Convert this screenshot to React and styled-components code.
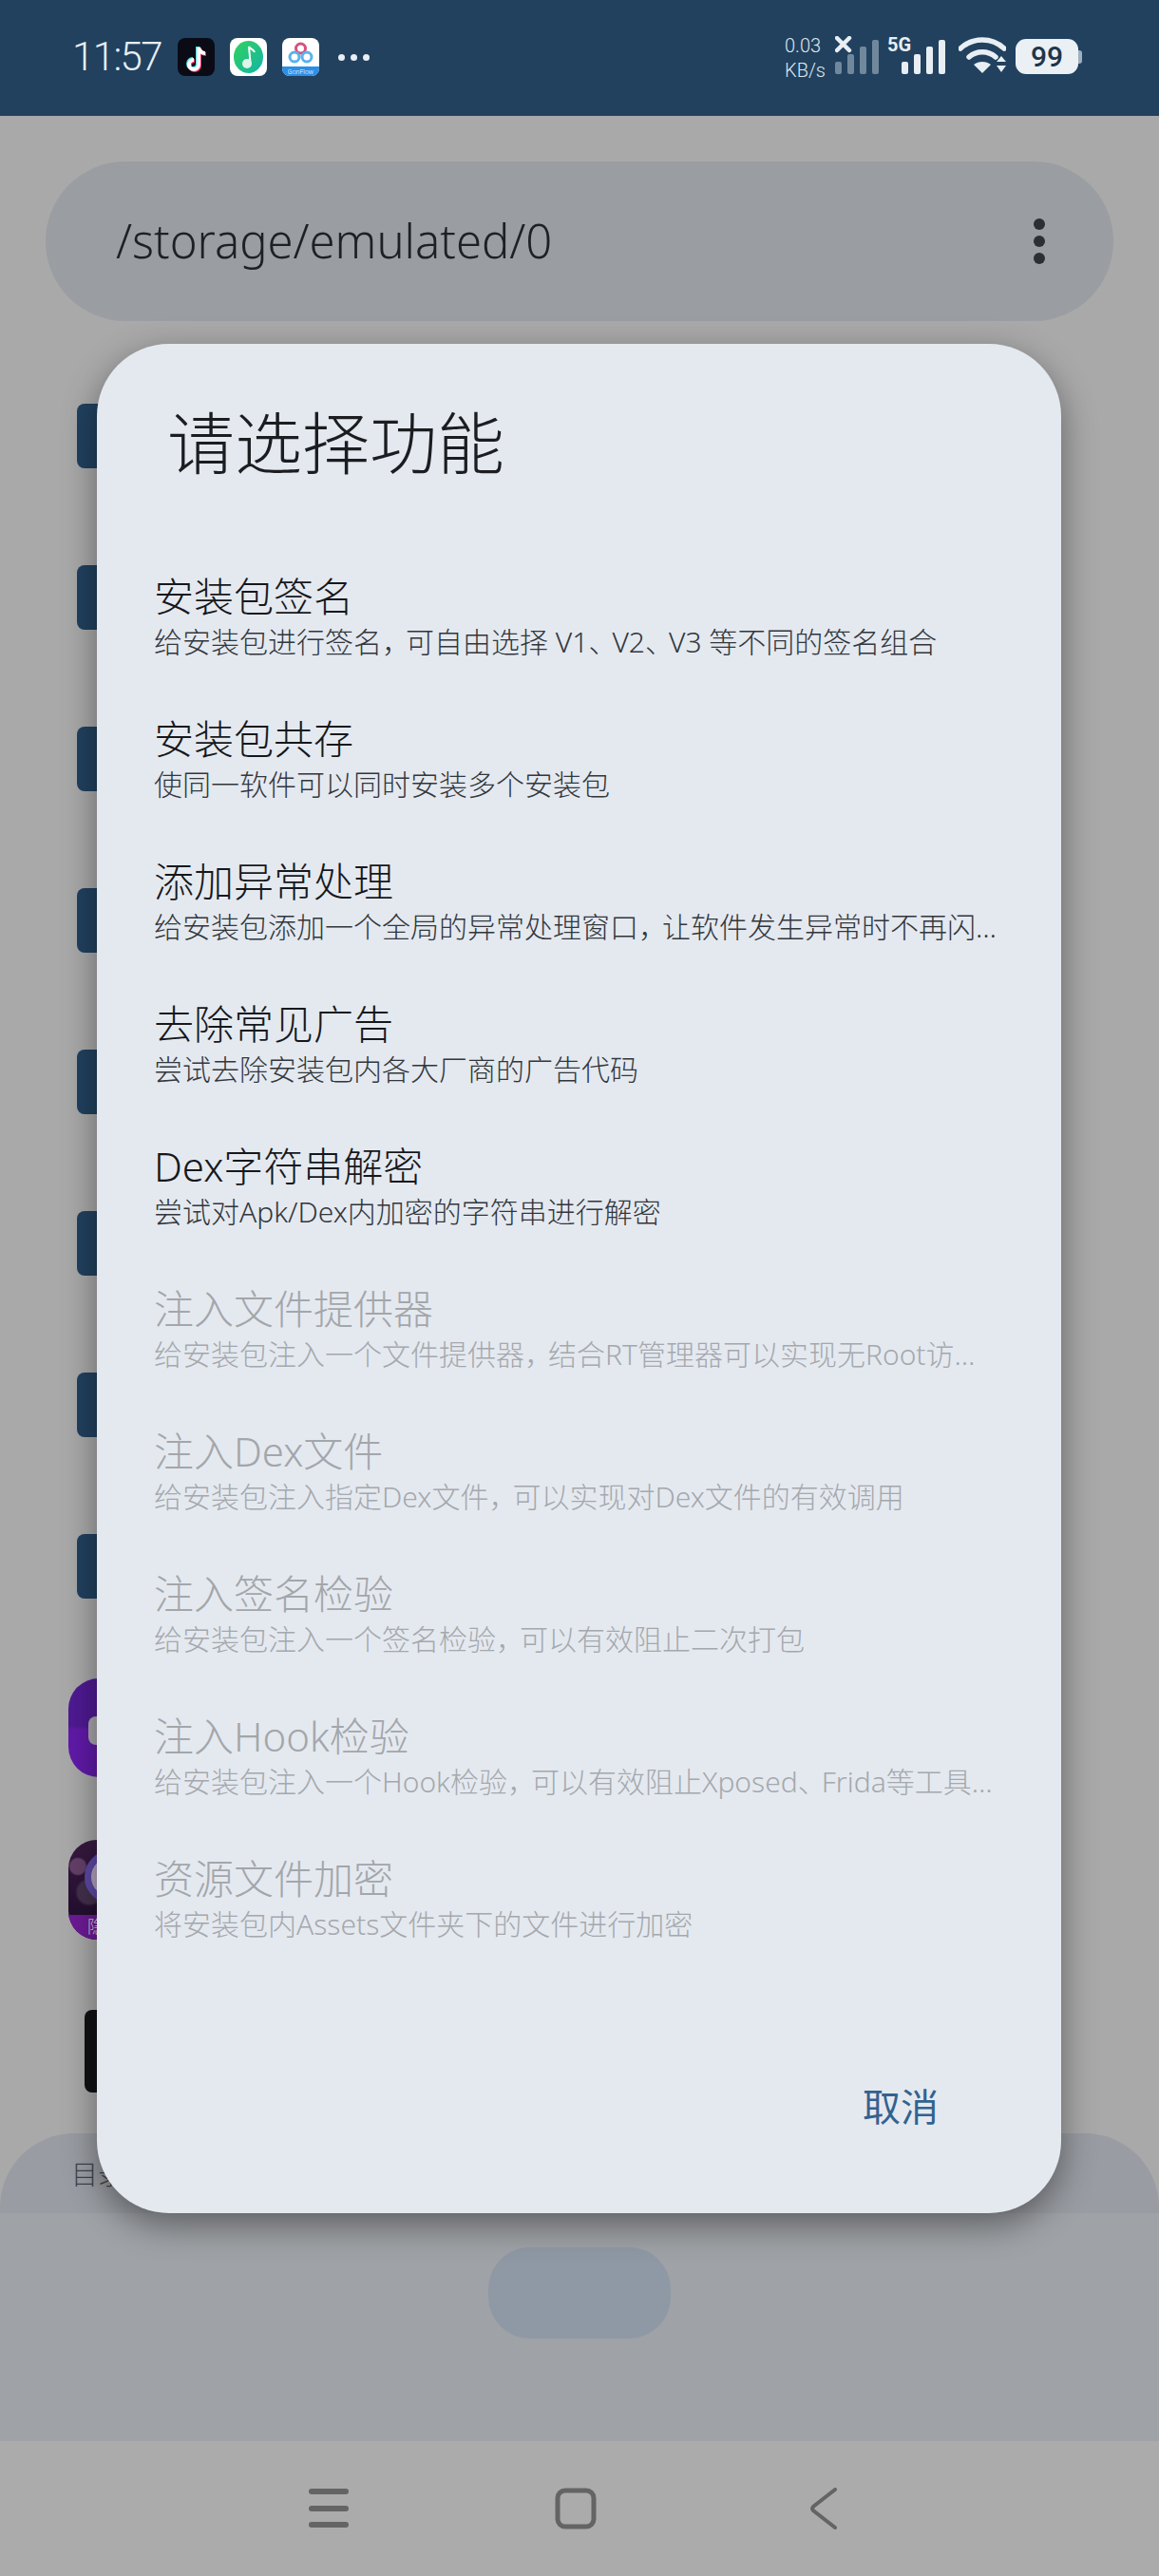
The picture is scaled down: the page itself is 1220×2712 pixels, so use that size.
import styled, { createGlobalStyle } from 'styled-components';

const Global = createGlobalStyle`
  html, body { margin: 0; padding: 0; }
  body { font-family: Roboto, "Noto Sans CJK SC", sans-serif; font-weight: 300; }
`;

const Screen = styled.div`
  position: relative;
  width: 1220px;
  height: 2712px;
  overflow: hidden;
  display: flex;
  flex-direction: column;
  background: #a9a9aa;
`;

const StatusBar = styled.header`
  height: 122px;
  flex: none;
  background: #21415f;
  color: #e8eef3;
  display: flex;
  align-items: flex-start;
  justify-content: space-between;
  padding: 38px 85px 0 76px;
  box-sizing: border-box;
`;

const StatusLeft = styled.div`
  display: flex;
  align-items: center;
  height: 44px;
`;

const Clock = styled.span`
  font-size: 42px;
  line-height: 44px;
  width: 111px;
  letter-spacing: -1.6px;
`;

const AppIcon = styled.svg`
  width: 39px;
  height: 40px;
  margin-right: 16px;
  display: block;
`;

const MoreDots = styled.div`
  display: flex;
  gap: 6px;
  margin-left: 4px;
  span {
    width: 7px;
    height: 7px;
    border-radius: 50%;
    background: #e8eef3;
  }
`;

const StatusRight = styled.div`
  display: flex;
  align-items: flex-start;
`;

const Speed = styled.div`
  width: 53px;
  font-size: 20px;
  line-height: 26px;
  color: #dfe7ee;
  margin-top: -3px;
`;

const Signal = styled.svg`
  display: block;
  height: 40px;
  margin-right: ${(p) => p.$gap}px;
`;

const Battery = styled.div`
  position: relative;
  width: 66px;
  height: 37px;
  margin-top: 3px;
  border-radius: 11px;
  background: #eaf0f4;
  color: #21354b;
  font-size: 30px;
  font-weight: 500;
  line-height: 37px;
  text-align: center;
  &::after {
    content: '';
    position: absolute;
    right: -4px;
    top: 12px;
    width: 4px;
    height: 14px;
    border-radius: 0 3px 3px 0;
    background: #9fb0bf;
  }
`;

const Main = styled.main`
  flex: 1;
  display: flex;
  flex-direction: column;
`;

const PathBar = styled.div`
  height: 168px;
  margin: 48px 48px 0;
  padding: 0 72px 0 74px;
  border-radius: 84px;
  background: #9a9da1;
  color: #1d2024;
  display: flex;
  align-items: center;
  justify-content: space-between;
`;

const PathText = styled.span`
  margin-bottom: 3px;
  font-family: "Noto Sans", sans-serif;
  font-size: 49px;
`;

const MenuDots = styled.div`
  display: flex;
  flex-direction: column;
  gap: 6px;
  span {
    width: 12px;
    height: 12px;
    border-radius: 50%;
    background: #2c2f35;
  }
`;

const FileList = styled.div`
  margin: 36px 0 2px;
`;

const FileRow = styled.div`
  height: 170px;
  display: flex;
  align-items: center;
`;

const Folder = styled.div`
  width: 100px;
  height: 68px;
  margin-left: 81px;
  border-radius: 8px;
  background: #21415f;
`;

const PurpleApp = styled.div`
  position: relative;
  width: 104px;
  height: 104px;
  margin-left: 72px;
  border-radius: 32px;
  background: linear-gradient(#4f1a93 0 48%, #601aa8 52%);
  &::after {
    content: '';
    position: absolute;
    left: 21px;
    top: 40px;
    width: 40px;
    height: 30px;
    border-radius: 8px;
    background: #a9a7ad;
  }
`;

const PhotoApp = styled.div`
  position: relative;
  width: 104px;
  height: 105px;
  margin-left: 72px;
  border-radius: 30px;
  overflow: hidden;
  background:
    radial-gradient(circle at 10px 28px, #64406a 0 8px, transparent 10px),
    radial-gradient(circle at 22px 55px, #43304c 0 12px, transparent 15px),
    linear-gradient(#3a1a42, #1c0b2a);
  &::before {
    content: '';
    position: absolute;
    left: 17px;
    top: 11px;
    width: 56px;
    height: 56px;
    box-sizing: border-box;
    border: 7px solid #5d4aa5;
    border-radius: 50%;
    background: #b3a3bf;
  }
`;

const PhotoLabel = styled.div`
  position: absolute;
  left: 0;
  right: 0;
  bottom: 0;
  height: 26px;
  padding-left: 20px;
  background: #6d1a95;
  color: #d8cfe0;
  font-size: 18px;
  line-height: 26px;
`;

const BlackApp = styled.div`
  width: 90px;
  height: 87px;
  margin-left: 89px;
  border-radius: 8px;
  background: #0f1214;
`;

const Sheet = styled.section`
  height: 84px;
  flex: none;
  padding: 33px 0 0 75px;
  box-sizing: border-box;
  border-radius: 78px 78px 0 0;
  background: #999ca2;
  color: #3f4348;
  font-size: 28px;
  line-height: 24px;
`;

const FabArea = styled.div`
  height: 240px;
  flex: none;
  padding-top: 36px;
  box-sizing: border-box;
  background: #9fa2a6;
  display: flex;
  justify-content: center;
`;

const Fab = styled.div`
  width: 192px;
  height: 96px;
  border-radius: 44px;
  background: #8f99a5;
`;

const NavBar = styled.nav`
  height: 142px;
  flex: none;
  background: #ababab;
  display: grid;
  grid-template-columns: repeat(3, 260px);
  justify-content: center;
  justify-items: center;
  align-items: center;
  padding: 0 8px 0 0;
  box-sizing: border-box;
`;

const NavIcon = styled.svg`
  display: block;
  width: 44px;
  height: 44px;
`;

const Dialog = styled.div`
  position: absolute;
  left: 102px;
  top: 362px;
  width: 1015px;
  height: 1968px;
  box-sizing: border-box;
  padding: 59px 60px 88px 60px;
  border-radius: 76px;
  background: #e4e9f0;
  box-shadow: 0 12px 36px rgba(0, 0, 0, 0.42);
  display: flex;
  flex-direction: column;
  font-family: "Noto Sans", "Noto Sans CJK SC", sans-serif;
`;

const DialogTitle = styled.h2`
  margin: 0 0 89px 14px;
  font-size: 71px;
  font-weight: 300;
  line-height: 90px;
  color: #1b1d20;
`;

const Option = styled.div`
  height: 150px;
  flex: none;
`;

const OptionTitle = styled.div`
  font-size: 42px;
  line-height: 55px;
  white-space: nowrap;
  color: ${(p) => (p.$disabled ? '#a3a6aa' : '#16181b')};
`;

const OptionDesc = styled.div`
  margin-right: 5px;
  font-size: 30px;
  line-height: 41px;
  white-space: nowrap;
  overflow: hidden;
  text-overflow: ellipsis;
  color: ${(p) => (p.$disabled ? '#a5a8ac' : '#33373c')};
`;

const Mark = styled.span`
  letter-spacing: -5px;
`;

const Actions = styled.div`
  margin-top: auto;
  padding-right: 69px;
  display: flex;
  justify-content: flex-end;
`;

const CancelButton = styled.button`
  padding: 0;
  border: 0;
  background: none;
  font-family: inherit;
  font-weight: 400;
  font-size: 40px;
  line-height: 48px;
  color: #33628f;
`;

const options = [
  { title: '安装包签名', desc: '给安装包进行签名，可自由选择 V1、V2、V3 等不同的签名组合' },
  { title: '安装包共存', desc: '使同一软件可以同时安装多个安装包' },
  { title: '添加异常处理', desc: '给安装包添加一个全局的异常处理窗口，让软件发生异常时不再闪退并显示详细信息' },
  { title: '去除常见广告', desc: '尝试去除安装包内各大厂商的广告代码' },
  { title: 'Dex字符串解密', desc: '尝试对Apk/Dex内加密的字符串进行解密' },
  { title: '注入文件提供器', desc: '给安装包注入一个文件提供器，结合RT管理器可以实现无Root访问软件私有目录', disabled: true },
  { title: '注入Dex文件', desc: '给安装包注入指定Dex文件，可以实现对Dex文件的有效调用', disabled: true },
  { title: '注入签名检验', desc: '给安装包注入一个签名检验，可以有效阻止二次打包', disabled: true },
  { title: '注入Hook检验', desc: '给安装包注入一个Hook检验，可以有效阻止Xposed、Frida等工具进行注入', disabled: true },
  { title: '资源文件加密', desc: '将安装包内Assets文件夹下的文件进行加密', disabled: true },
];

const folders = [0, 1, 2, 3, 4, 5, 6, 7];

// the font in the reference sets ， and 、 narrower than a full em
const withMarks = (text) =>
  text.split(/([，、])/).map((part, i) => (i % 2 ? <Mark key={i}>{part}</Mark> : part));

const TikTokIcon = () => (
  <AppIcon viewBox="0 0 39 40">
    <rect width="39" height="40" rx="8" fill="#0b0b16" />
    <path d="M21 9v18a5 5 0 1 1-5-5" fill="none" stroke="#3fe0e0" strokeWidth="4" />
    <path d="M23 11v18a5 5 0 1 1-5-5M23 11c1 4 4 6 7 6" fill="none" stroke="#ef2f58" strokeWidth="4" />
    <path d="M22 10v18a5 5 0 1 1-5-5M22 10c1 4 4 6 7 6" fill="none" stroke="#fff" strokeWidth="4" />
  </AppIcon>
);

const MusicIcon = () => (
  <AppIcon viewBox="0 0 39 40">
    <defs>
      <linearGradient id="musicFill" x1="0" y1="0" x2="1" y2="1">
        <stop offset="0" stopColor="#2fd35c" />
        <stop offset="1" stopColor="#14b4a8" />
      </linearGradient>
    </defs>
    <rect width="39" height="40" rx="8" fill="#fff" />
    <ellipse cx="19.5" cy="20" rx="15.5" ry="17" fill="url(#musicFill)" />
    <path d="M20 9l1.5 17" stroke="#fff" strokeWidth="2" />
    <path d="M20 9c2 3 5 3 6 6" fill="none" stroke="#fff" strokeWidth="2" />
    <circle cx="18" cy="27" r="5" fill="#dff5ea" />
  </AppIcon>
);

const GonFlowIcon = () => (
  <AppIcon viewBox="0 0 39 40">
    <rect width="39" height="40" rx="8" fill="#fff" />
    <path d="M0 30h39v2a8 8 0 0 1-8 8H8a8 8 0 0 1-8-8z" fill="#2b8fe6" />
    <circle cx="19.5" cy="11" r="5" fill="none" stroke="#d94f7d" strokeWidth="3" />
    <circle cx="13" cy="20" r="5" fill="none" stroke="#5bb2ea" strokeWidth="3" />
    <circle cx="26" cy="20" r="5" fill="none" stroke="#5bb2ea" strokeWidth="3" />
    <text x="19.5" y="38" fontSize="7" textAnchor="middle" fill="#fff" fontFamily="Roboto, sans-serif">GonFlow</text>
  </AppIcon>
);

const bars = [
  { x: 0, h: 13 },
  { x: 13, h: 21 },
  { x: 26, h: 29 },
  { x: 39, h: 36 },
];

const App = () => {
  return (
    <Screen>
      <Global />
      <StatusBar>
        <StatusLeft>
          <Clock>11:57</Clock>
          <TikTokIcon />
          <MusicIcon />
          <GonFlowIcon />
          <MoreDots>
            <span />
            <span />
            <span />
          </MoreDots>
        </StatusLeft>
        <StatusRight>
          <Speed>
            0.03
            <br />
            KB/s
          </Speed>
          <Signal viewBox="0 0 46 40" width="46" $gap={9}>
            {bars.map((b) => (
              <rect key={b.x} x={b.x} y={40 - b.h} width="7" height={b.h} rx="2" fill="#71889c" />
            ))}
            <path d="M2 2l13 13M15 2L2 15" stroke="#e8eef3" strokeWidth="4.5" strokeLinecap="round" />
          </Signal>
          <Signal viewBox="0 0 61 40" width="61" $gap={14}>
            {bars.map((b) => (
              <rect key={b.x} x={b.x + 15} y={40 - b.h} width="7" height={b.h} rx="2" fill="#e8eef3" />
            ))}
            <text x="0" y="16" fontSize="20" fontWeight="700" fill="#e8eef3" fontFamily="Roboto, sans-serif">5G</text>
          </Signal>
          <Signal viewBox="0 0 50 40" width="50" $gap={10}>
            <path d="M2 13c13-12 33-12 46 0" fill="none" stroke="#e8eef3" strokeWidth="5.5" strokeLinecap="round" />
            <path d="M11 22c8-7 20-7 28 0" fill="none" stroke="#e8eef3" strokeWidth="5.5" strokeLinecap="round" />
            <path d="M16 30c5-4 13-4 18 0l-9 9z" fill="#e8eef3" />
            <path d="M45 27l5-6 5 6zM45 31h10l-5 7z" fill="#e8eef3" transform="translate(-5 0)" />
          </Signal>
          <Battery>99</Battery>
        </StatusRight>
      </StatusBar>

      <Main>
        <PathBar>
          <PathText>/storage/emulated/0</PathText>
          <MenuDots>
            <span />
            <span />
            <span />
          </MenuDots>
        </PathBar>
        <FileList>
          {folders.map((f) => (
            <FileRow key={f}>
              <Folder />
            </FileRow>
          ))}
          <FileRow>
            <PurpleApp />
          </FileRow>
          <FileRow>
            <PhotoApp>
              <PhotoLabel>隐</PhotoLabel>
            </PhotoApp>
          </FileRow>
          <FileRow>
            <BlackApp />
          </FileRow>
        </FileList>
        <Sheet>目录</Sheet>
        <FabArea>
          <Fab />
        </FabArea>
      </Main>

      <NavBar>
        <NavIcon viewBox="0 0 44 44">
          <path d="M4 4h36M4 22h36M4 39h36" stroke="#646464" strokeWidth="6" strokeLinecap="round" />
        </NavIcon>
        <NavIcon viewBox="0 0 44 44">
          <rect x="3" y="3" width="38" height="38" rx="8" fill="none" stroke="#646464" strokeWidth="5" />
        </NavIcon>
        <NavIcon viewBox="0 0 44 44">
          <path d="M35 2L12 20a3 3 0 0 0 0 4l23 18" fill="none" stroke="#646464" strokeWidth="4" strokeLinecap="round" />
        </NavIcon>
      </NavBar>

      <Dialog>
        <DialogTitle>请选择功能</DialogTitle>
        {options.map((o) => (
          <Option key={o.title}>
            <OptionTitle $disabled={o.disabled}>{o.title}</OptionTitle>
            <OptionDesc $disabled={o.disabled}>{withMarks(o.desc)}</OptionDesc>
          </Option>
        ))}
        <Actions>
          <CancelButton>取消</CancelButton>
        </Actions>
      </Dialog>
    </Screen>
  );
};

export default App;
